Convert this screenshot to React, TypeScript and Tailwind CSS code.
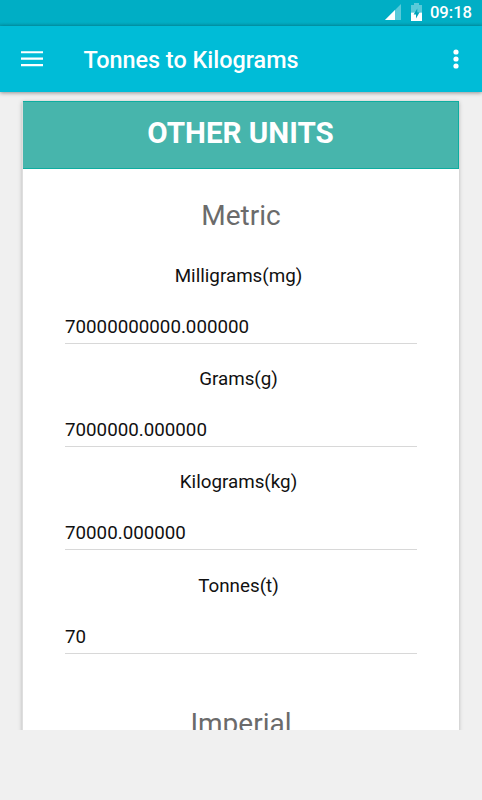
import React from "react";

const metricUnits = [
  { label: "Milligrams(mg)", value: "70000000000.000000" },
  { label: "Grams(g)", value: "7000000.000000" },
  { label: "Kilograms(kg)", value: "70000.000000" },
  { label: "Tonnes(t)", value: "70" },
];

const StatusBar = () => {
  return (
    <div className="flex h-[26px] items-start justify-end bg-gradient-to-b from-[#00aec5] from-85% to-[#009fb3] pr-[10px] text-white">
      <svg className="mt-1 h-4 w-4" viewBox="0 0 16 16">
        <path d="M0 16 16 0V16Z" fill="#fff" fillOpacity=".35" />
        <path d="M0 16 10 6V16Z" fill="#fff" />
      </svg>
      <svg className="mt-[3px] ml-[10px] h-[18px] w-[11px]" viewBox="0 0 11 18">
        <path d="M3 0H8V2H11V9.5H0V2H3Z" fill="#fff" fillOpacity=".35" />
        <path d="M0 9.5H11V18H0Z" fill="#fff" />
        <path d="M6.3 5.5 2.6 11.4H5V15.5L8.6 9.2H6.3Z" fill="#00a4ba" />
      </svg>
      <span className="ml-2 text-[16.6px] leading-[26px] font-medium">
        09:18
      </span>
    </div>
  );
};

const AppBar = () => {
  return (
    <header className="relative flex h-[66px] items-center bg-[#00bcd7] pr-[23px] pl-[21px] text-white shadow-[0_1px_4px_rgba(0,0,0,0.4)]">
      <svg className="h-4 w-[22px]" viewBox="0 0 22 16" fill="currentColor">
        <path d="M0 .2H22V2.3H0ZM0 6.6H22V8.8H0ZM0 13H22V15.2H0Z" />
      </svg>
      <h1 className="mt-[2px] ml-[40.5px] flex-1 text-[23.4px] leading-7 font-medium">
        Tonnes to Kilograms
      </h1>
      <svg className="h-5 w-[6px]" viewBox="0 0 6 20" fill="currentColor">
        <circle cx="3" cy="3" r="2.6" />
        <circle cx="3" cy="10" r="2.6" />
        <circle cx="3" cy="17" r="2.6" />
      </svg>
    </header>
  );
};

const App = () => {
  return (
    <div className="h-[800px] w-[482px] overflow-hidden bg-[#f0f0f0] font-['Roboto',sans-serif]">
      <StatusBar />
      <AppBar />
      <main className="h-[638px] overflow-hidden pt-[9px] pr-[23px] pl-[22px]">
        <section className="h-[700px] border-l border-[#dedede] bg-white shadow-[0_1px_4px_rgba(0,0,0,0.25)]">
          <h2 className="h-[68px] border border-l-0 border-[#0eada0] bg-[#47b5ac] pt-[13px] text-center text-[29.6px] leading-9 font-bold text-white">
            OTHER UNITS
          </h2>
          <h3 className="pt-[29px] text-center text-[28px] leading-9 text-[#6b6b6b]">
            Metric
          </h3>
          <div className="mr-[42px] ml-[42px] pt-[7px]">
            {metricUnits.map((unit) => (
              <div key={unit.label} className="h-[103.2px] pt-[23px]">
                <p className="pr-[5px] text-center text-[18.8px] leading-6 text-[#111]">
                  {unit.label}
                </p>
                <p className="mt-[27px] h-[29px] border-b border-[#d8d8d8] text-[18.75px] leading-6 text-[#111]">
                  {unit.value}
                </p>
              </div>
            ))}
          </div>
          <h3 className="pt-[52px] text-center text-[28px] leading-9 text-[#6b6b6b]">
            Imperial
          </h3>
        </section>
      </main>
    </div>
  );
};

export default App;
